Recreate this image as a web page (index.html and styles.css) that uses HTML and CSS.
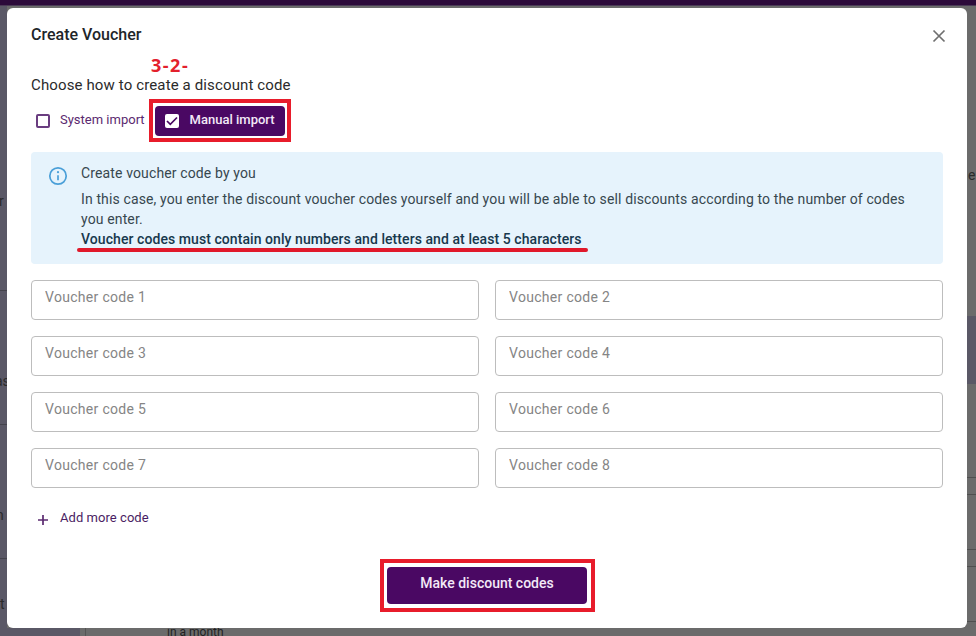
FILE: index.html
```html
<!DOCTYPE html>
<html lang="en">
<head>
  <meta charset="UTF-8" />
  <title>Create Voucher</title>
  <link rel="stylesheet" href="styles.css">
</head>
<body>
  <div class="topbar"></div>

  <!-- bits of the page behind the dialog -->
  <div class="behind">
    <span class="behind-left behind-l1">r</span>
    <span class="behind-left behind-l2">as</span>
    <span class="behind-left behind-l3">n</span>
    <span class="behind-left behind-l4">t</span>
    <span class="behind-right">e</span>
    <i class="rule rule-left" style="top: 290px"></i>
    <i class="rule rule-left" style="top: 424px"></i>
    <i class="rule rule-left" style="top: 558px"></i>
    <i class="rule rule-right" style="top: 477px"></i>
    <i class="rule rule-right" style="top: 494px"></i>
    <i class="rule rule-right" style="top: 549px"></i>
    <i class="rule rule-right" style="top: 566px"></i>
    <i class="rule rule-right" style="top: 621px"></i>
    <div class="behind-band"></div>
    <div class="behind-bottom"><span>in a month</span></div>
  </div>

  <div class="modal">
    <div class="modal-head">
      <h2>Create Voucher</h2>
      <svg class="close-icon" width="14" height="14" viewBox="0 0 14 14"><path d="M1.5 1.5l11 11M12.5 1.5l-11 11" /></svg>
    </div>

    <p class="choose">Choose how to create a discount code</p>

    <div class="import-row">
      <label class="import-option">
        <span class="box"></span>
        <span class="option-text">System import</span>
      </label>
      <label class="import-option active">
        <span class="box">
          <svg width="12" height="10" viewBox="0 0 12 10"><path d="M1 5l3.3 3.3L11 1.5" /></svg>
        </span>
        <span class="option-text">Manual import</span>
      </label>
    </div>

    <div class="alert">
      <svg class="alert-icon" width="20" height="20" viewBox="0 0 20 20">
        <circle cx="10" cy="10" r="8.2" />
        <path d="M10 9.2v5" />
        <circle class="dot" cx="10" cy="6.2" r="1.1" />
      </svg>
      <div class="alert-text">
        <p class="alert-title">Create voucher code by you</p>
        <p>In this case, you enter the discount voucher codes yourself and you will be able to sell discounts according to the number of codes you enter.</p>
        <p class="alert-strong">Voucher codes must contain only numbers and letters and at least 5 characters</p>
      </div>
    </div>

    <div class="codes">
      <input type="text" placeholder="Voucher code 1" />
      <input type="text" placeholder="Voucher code 2" />
      <input type="text" placeholder="Voucher code 3" />
      <input type="text" placeholder="Voucher code 4" />
      <input type="text" placeholder="Voucher code 5" />
      <input type="text" placeholder="Voucher code 6" />
      <input type="text" placeholder="Voucher code 7" />
      <input type="text" placeholder="Voucher code 8" />
    </div>

    <div class="add-more">
      <svg width="12" height="12" viewBox="0 0 12 12"><path d="M6 1v10M1 6h10" /></svg>
      Add more code
    </div>

    <div class="modal-foot">
      <button class="submit">Make discount codes</button>
    </div>
  </div>

  <!-- red marks drawn on top of the screenshot -->
  <div class="mark-label">3-2-</div>
  <div class="mark-box mark-manual"></div>
  <div class="mark-line"></div>
  <div class="mark-box mark-submit"></div>
</body>
</html>
```

FILE: styles.css
```css
* {
  margin: 0;
  padding: 0;
  box-sizing: border-box;
}
html, body {
  height: 100%;
}
body {
  position: relative;
  font-family: Roboto, sans-serif;
  background: #6b6b6b;
  overflow: hidden;
}
.topbar {
  height: 6px;
  background: #2c0a3a;
  border-bottom: 1px solid #4a3a55;
}
.behind-left, .behind-right {
  position: absolute;
  font-size: 14px;
  color: #2a2a2a;
}
.behind::before {
  content: "";
  position: absolute;
  top: 6px;
  left: 0;
  width: 7px;
  height: 630px;
  background: #5a5866;
}
.behind-l1 { top: 193px; left: -1px; }
.behind-l2 { top: 373px; left: -5px; }
.behind-l3 { top: 507px; left: -4px; }
.behind-l4 { top: 596px; left: 0; }
.behind-right { top: 167px; left: 968px; }
.rule {
  position: absolute;
  height: 1px;
  background: #44434c;
}
.rule-left {
  left: 0;
  width: 7px;
}
.rule-right {
  left: 967px;
  width: 9px;
  background: #4f4f4f;
}
.behind-band {
  position: absolute;
  top: 316px;
  left: 967px;
  width: 9px;
  height: 68px;
  background: #5a5866;
}
.behind-bottom {
  position: absolute;
  top: 628px;
  left: 85px;
  width: 891px;
  height: 8px;
  overflow: hidden;
  border-left: 1px solid #555;
  font-size: 12px;
  color: #222;
}
.behind-bottom span {
  display: block;
  margin-left: 81px;
  margin-top: -3px;
}
.behind-bottom::before {
  content: "";
  position: fixed;
  top: 628px;
  left: 0;
  width: 80px;
  height: 8px;
  background: #5a5866;
}
.modal {
  position: absolute;
  top: 8px;
  left: 7px;
  width: 960px;
  height: 620px;
  background: #fff;
  border-radius: 6px;
  padding: 0 24px;
}
.modal-head {
  display: flex;
  align-items: center;
  justify-content: space-between;
  height: 52px;
}
.modal-head h2 {
  font-size: 16px;
  font-weight: 500;
  color: #212529;
}
.close-icon {
  margin-top: 3px;
  margin-right: -3px;
  stroke: #6f6f6f;
  stroke-width: 1.7;
  fill: none;
}
.choose {
  margin-top: 16px;
  font-size: 15px;
  letter-spacing: 0.13px;
  line-height: 18px;
  color: #2b2b2b;
}
.import-row {
  display: flex;
  align-items: center;
  gap: 5px;
  margin-top: 12px;
  height: 30px;
}
.import-option {
  display: flex;
  align-items: center;
  gap: 10px;
  height: 30px;
  padding: 0 5px;
  font-size: 13px;
  color: #5b2a70;
  border-radius: 4px;
}
.option-text {
  padding-bottom: 4px;
}
.import-option.active {
  gap: 11px;
  width: 130px;
  padding: 0 10px;
  background: #4a0863;
  color: #f3e9f7;
  font-weight: 500;
}
.box {
  display: flex;
  align-items: center;
  justify-content: center;
  width: 14px;
  height: 14px;
  border: 2px solid #6a3d80;
  border-radius: 2px;
}
.active .box {
  border: 0;
  background: #fff;
}
.box svg {
  stroke: #4a0863;
  stroke-width: 1.7;
  fill: none;
}
.alert {
  display: flex;
  gap: 13px;
  height: 112px;
  margin-top: 16px;
  padding: 11px 17px;
  background: #e6f3fc;
  border-radius: 4px;
}
.alert-icon {
  flex: none;
  margin-top: 3px;
  stroke: #4a9fd8;
  stroke-width: 1.7;
  fill: none;
}
.alert-icon .dot {
  fill: #4a9fd8;
  stroke: none;
}
.alert-text {
  font-size: 14px;
  letter-spacing: 0.13px;
  line-height: 20px;
  color: #37474f;
}
.alert-text .alert-title {
  margin-bottom: 6px;
}
.alert-strong {
  color: #17384d;
  font-weight: 500;
  letter-spacing: 0.07px;
}
.codes {
  display: grid;
  grid-template-columns: 448px 448px;
  gap: 16px;
  margin-top: 16px;
}
.codes input {
  height: 40px;
  padding: 0 13px 6px;
  border: 1px solid #bdbdbd;
  border-radius: 4px;
  font-family: inherit;
  font-size: 14px;
  letter-spacing: 0.3px;
}
.codes input::placeholder {
  color: #858585;
  opacity: 1;
}
.add-more {
  display: flex;
  align-items: center;
  gap: 11px;
  margin-top: 20px;
  padding-left: 6px;
  height: 18px;
  font-size: 13px;
  letter-spacing: 0.05px;
  color: #4a1d63;
}
.add-more svg {
  margin-top: 6px;
  stroke: #5b2a70;
  stroke-width: 1.7;
  fill: none;
}
.modal-foot {
  display: flex;
  justify-content: center;
  margin-top: 41px;
}
.submit {
  width: 200px;
  height: 37px;
  padding-bottom: 6px;
  border: 0;
  border-radius: 4px;
  background: #4a0863;
  color: #f3e9f7;
  font-family: inherit;
  font-size: 14px;
  font-weight: 500;
}
.mark-label {
  position: absolute;
  top: 53px;
  left: 151px;
  font-family: "Open Sans", sans-serif;
  font-size: 18px;
  font-weight: 700;
  letter-spacing: 1.5px;
  color: #e3202c;
}
.mark-box {
  position: absolute;
  border: 4px solid #e81c2b;
}
.mark-manual {
  top: 99px;
  left: 149px;
  width: 142px;
  height: 43px;
}
.mark-submit {
  top: 559px;
  left: 380px;
  width: 215px;
  height: 53px;
}
.mark-line {
  position: absolute;
  top: 248px;
  left: 77px;
  width: 511px;
  height: 4px;
  background: #e0182a;
  border-radius: 2px;
}
```
